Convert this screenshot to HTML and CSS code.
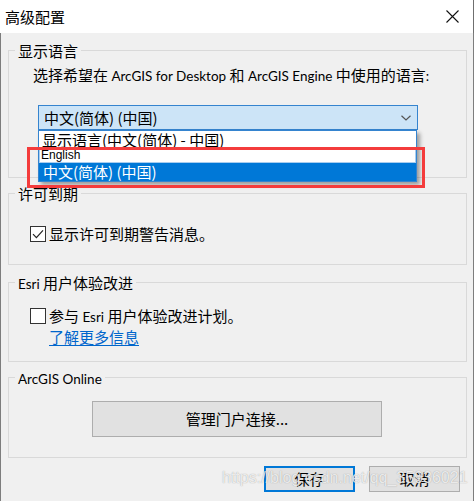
FILE: index.html
```html
<!DOCTYPE html>
<html lang="zh-CN">
<head>
<meta charset="utf-8">
<title>高级配置</title>
<link rel="stylesheet" href="styles.css">
</head>
<body>
<div class="window">
  <div class="titlebar">
    <span class="title">高级配置</span>
    <svg class="close" viewBox="0 0 13 13" aria-hidden="true"><path d="M0.5 0.5 L12.5 12.5 M12.5 0.5 L0.5 12.5" stroke="#111" stroke-width="1.1" fill="none"/></svg>
  </div>
  <div class="content">
    <div class="group g-lang">
      <div class="legend">显示语言</div>
      <div class="desc">选择希望在 <span class="lat">ArcGIS for Desktop</span> 和 <span class="lat">ArcGIS Engine</span> 中使用的语言<span class="lat">:</span></div>
      <div class="combo-wrap">
        <div class="combo">
          <span>中文(简体) (中国)</span>
          <svg class="chevron" viewBox="0 0 10 6" aria-hidden="true"><path d="M0.5 0.8 L5 5 L9.5 0.8" stroke="#555" stroke-width="1.2" fill="none"/></svg>
        </div>
        <ul class="dropdown">
          <li class="item item1">显示语言(中文(简体) - 中国)</li>
          <li class="item item-en">English</li>
          <li class="item item-sel">中文(简体) (中国)</li>
        </ul>
      </div>
    </div>

    <div class="group g-lic">
      <div class="legend">许可到期</div>
      <div class="check-row">
        <span class="checkbox"><svg viewBox="0 0 14 14" aria-hidden="true"><path d="M2 7.2 L5.4 10.6 L12 3.4" stroke="#222" stroke-width="1.2" fill="none"/></svg></span>
        <span>显示许可到期警告消息。</span>
      </div>
    </div>

    <div class="group g-esri">
      <div class="legend"><span class="lat">Esri</span> 用户体验改进</div>
      <div class="check-row">
        <span class="checkbox"></span>
        <span>参与 <span class="lat">Esri</span> 用户体验改进计划。</span>
      </div>
      <a class="link" href="#">了解更多信息</a>
    </div>

    <div class="group g-online">
      <div class="legend"><span class="lat">ArcGIS Online</span></div>
      <button class="btn portal" type="button">管理门户连接...</button>
    </div>

    <div class="actions">
      <button class="btn primary" type="button">保存</button>
      <button class="btn" type="button">取消</button>
    </div>
  </div>

  <div class="highlight"></div>
  <div class="watermark">https://blog.csdn.net/qq_35936021</div>
</div>
</body>
</html>
```

FILE: styles.css
```css
* {
  box-sizing: border-box;
  margin: 0;
  padding: 0;
}

html,
body {
  width: 474px;
  height: 501px;
  overflow: hidden;
}

body {
  font-family: "Noto Sans CJK SC", "Noto Sans", sans-serif;
  font-size: 15px;
  color: #000;
  background: #f0f0f0;
}

.lat {
  font-family: "Lato", "Noto Sans CJK SC", sans-serif;
  font-size: 13.5px;
}

.window {
  position: relative;
  width: 474px;
  height: 501px;
  display: flex;
  flex-direction: column;
}

.titlebar {
  flex: none;
  height: 33px;
  background: #fff;
  display: flex;
  align-items: center;
  justify-content: space-between;
  padding: 0 14px 0 5px;
  border-right: 1px solid #6f6f6f;
}

.title {
  font-size: 15px;
  line-height: 18px;
}

.close {
  display: block;
  width: 13px;
  height: 13px;
}

.content {
  flex: 1;
  background: #f0f0f0;
  border-left: 1px solid #7d7d7d;
  border-right: 1px solid #7d7d7d;
  padding: 0 6px 0 7px;
  display: flex;
  flex-direction: column;
}

.group {
  border: 1px solid #d9d9d9;
}

.legend {
  width: fit-content;
  height: 16px;
  margin: -8px 0 0 6px;
  padding: 0 3px;
  background: #f0f0f0;
  line-height: 16px;
}

.g-lang {
  margin-top: 17px;
  padding-bottom: 47px;
}

.desc {
  height: 18px;
  margin: 7px 0 0 24px;
  line-height: 18px;
}

.combo-wrap {
  position: relative;
  width: 380px;
  margin: 21px 0 0 29px;
}

.combo {
  height: 25px;
  border: 1px solid #3584cf;
  background: #cce4f7;
  display: flex;
  align-items: center;
  justify-content: space-between;
  padding: 0 6px 0 5px;
  line-height: 18px;
}

.chevron {
  display: block;
  width: 10px;
  height: 6px;
}

.dropdown {
  position: absolute;
  top: 25px;
  left: 0;
  width: 379px;
  z-index: 2;
  list-style: none;
  background: #fff;
  border: 1px solid #3584cf;
  box-shadow: 3px 3px 4px rgba(0, 0, 0, 0.35);
}

.item1 {
  line-height: 17px;
  padding-left: 3px;
}

.item-en {
  height: 15px;
  border: 1px solid #a9cdef;
  font-family: "Liberation Sans", Arial, sans-serif;
  font-size: 12px;
  line-height: 13px;
  padding-left: 1px;
}

.item-sel {
  line-height: 18px;
  background: #0078d7;
  color: #fff;
  padding-left: 4px;
}

.g-lic {
  margin-top: 15px;
  padding-bottom: 21px;
}

.check-row {
  display: flex;
  align-items: center;
  gap: 3px;
  height: 18px;
  margin: 23px 0 0 21px;
  line-height: 18px;
}

.checkbox {
  flex: none;
  width: 16px;
  height: 16px;
  border: 1px solid #333;
  background: #fff;
}

.checkbox svg {
  display: block;
  width: 14px;
  height: 14px;
}

.g-esri {
  margin-top: 17px;
  padding-bottom: 15px;
}

.g-esri .check-row {
  margin-top: 16px;
}

.link {
  display: block;
  width: fit-content;
  height: 18px;
  margin: 3px 0 0 40px;
  line-height: 18px;
  color: #0066cc;
  text-decoration: underline;
  text-underline-offset: 2px;
}

.g-online {
  margin-top: 15px;
  padding-bottom: 20px;
}

.btn {
  font-family: inherit;
  font-size: 15px;
  line-height: 18px;
  color: #000;
  background: #e1e1e1;
  border: 1px solid #adadad;
  width: 91px;
  height: 26px;
}

.btn.portal {
  display: block;
  width: 290px;
  height: 36px;
  margin: 15px 0 0 83px;
}

.btn.primary {
  border: 2px solid #0078d7;
}

.actions {
  display: flex;
  justify-content: flex-end;
  gap: 14px;
  margin-top: 8px;
  padding-right: 7px;
}

.highlight {
  position: absolute;
  left: 27px;
  top: 147px;
  width: 398px;
  height: 41px;
  border: 3px solid #f43c3c;
  z-index: 3;
}

.watermark {
  position: absolute;
  left: 222px;
  top: 467px;
  z-index: 4;
  white-space: nowrap;
  font-family: "Liberation Sans", Arial, sans-serif;
  font-size: 16px;
  line-height: 22px;
  color: rgba(255, 255, 255, 0.8);
  text-shadow: 0 0 1px rgba(80, 80, 80, 0.55);
}
```
